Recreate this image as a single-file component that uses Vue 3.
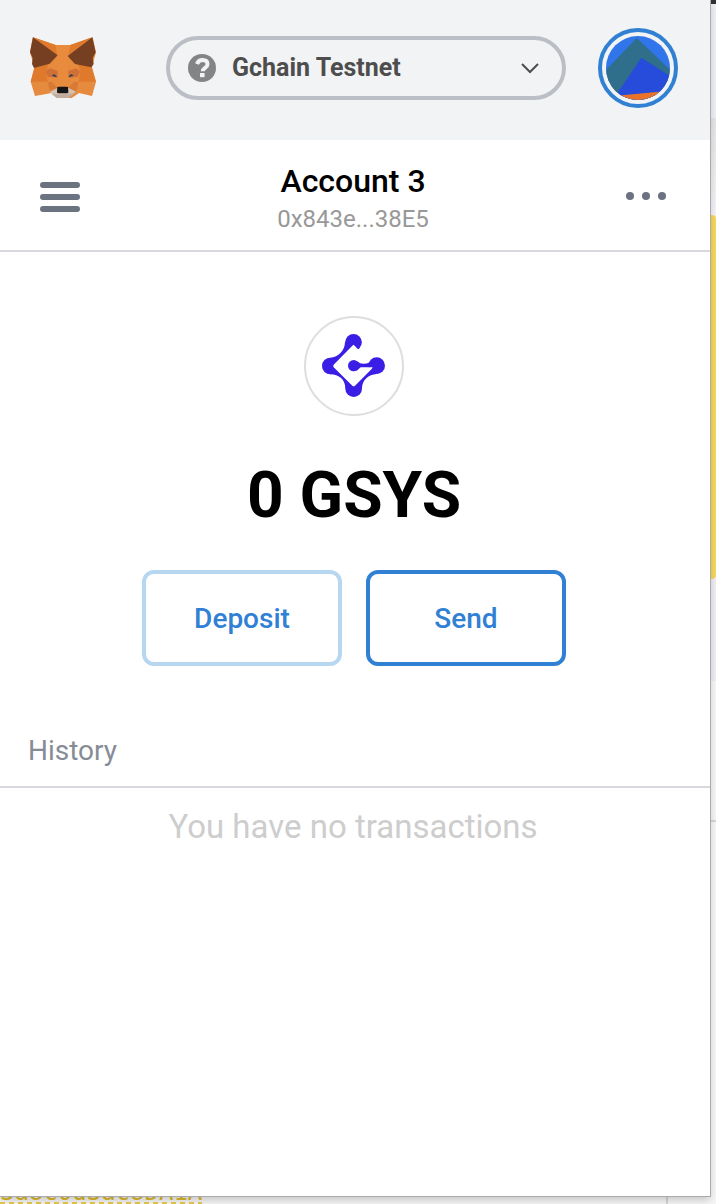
<script setup>
import { ref } from 'vue'

const network = ref('Gchain Testnet')
const networks = ['Gchain Testnet']
</script>

<template>
  <div class="desktop">
    <main class="popup">
      <header class="top">
        <svg class="fox" viewBox="30 24 198 192" aria-label="MetaMask" role="img">
          <path fill="#e68a3d" d="M38 28 107 51h44l67 -23 10 45-12 44 12 44-12 43-39-9-22 15h-38l-22-15-50 9-13-43 11-44-13-44Z" />
          <path fill="#df7a2d" d="M107 51 40 28l72 54ZM151 51l65-23-72 56ZM44 119l42-12-8 26 5 28H32ZM214 118l-41-12 8 26-5 29h52Z" />
          <path fill="#e88b3c" d="M107 51h44l-7 36 1 60-4 31h-25l-4-31V87Z" />
          <path fill="#d87a35" d="M83 162h12l18 18-22 12ZM175 162h-12l-19 18 24 12Z" />
          <path fill="#cf7137" d="m77 130 13-9 23 8v15l-3 5-27-3ZM180 130l-12-9-23 8v15l3 5 26-3Z" />
          <path fill="#763f21" d="M39 28 113 82 89 107 42 120l-6-12 2-18-8-17ZM217 28 143 84l22 24 49 10 7-10-3-18 9-17Z" />
          <path fill="#d5bfb0" d="m89 191 21-10h38l20 10-23 19h-35Z" />
          <path fill="#c0ad9e" d="m94 197 20 2h28l22-4-19 15h-35Z" />
          <path fill="#334555" d="m95 143 7-5 7 5 1 5ZM161 143l-7-5-7 5-1 5Z" />
          <path fill="#161616" d="m112 177 5-1h21l6 1 1 17-4 2h-26l-4-2Z" />
        </svg>
        <label class="network">
          <svg class="help" viewBox="0 0 28 28" aria-hidden="true">
            <circle cx="14" cy="14" r="14" fill="#838485" />
            <path d="M9 10c1-3 3-4 5.500-4 3 0 5 1.500 5 4.200 0 3.800-4.700 3.500-4.700 7" fill="none" stroke="#f2f3f4" stroke-width="4" />
            <path d="M12 19h4.600v4.200H12z" fill="#f2f3f4" />
          </svg>
          <select v-model="network" aria-label="Network">
            <option v-for="name in networks" :key="name">{{ name }}</option>
          </select>
          <svg class="chevron" viewBox="0 0 20 12" aria-hidden="true">
            <path d="m2 2 8 8 8-8" fill="none" stroke="#4d4d4d" stroke-width="2" />
          </svg>
        </label>
        <button class="avatar" type="button" aria-label="My accounts">
          <svg viewBox="378 48 192 192" aria-hidden="true">
            <path fill="#3075ea" d="M378 48h192v192H378z" />
            <path fill="#2f6f8b" d="m470 54 100 95v91H378v-90Z" />
            <path fill="#274bdb" d="m484 113 86 55v72H398Z" />
            <path fill="#ea732b" d="m410 227 160-15v28H410Z" />
            <path fill="#2f6f8b" d="m378 180 38 36-10 16h-28Z" />
          </svg>
        </button>
      </header>

      <section class="account">
        <button class="menu" type="button" aria-label="Menu"><i></i><i></i><i></i></button>
        <button class="identity" type="button">
          <span class="name">Account 3</span>
          <span class="address">0x843e...38E5</span>
        </button>
        <button class="more" type="button" aria-label="Account options"><i></i><i></i><i></i></button>
      </section>

      <section class="balance">
        <div class="token">
          <svg viewBox="81 84 192 192" aria-hidden="true">
            <g fill="#3a1ee5">
              <path d="M150 108c0 25-20 46-44 47v50c26 0 45 16 45 42h50c0-24 20-42 44-43l-14-20-55 15-15-80Z" />
              <circle cx="175.500" cy="109" r="25" />
              <circle cx="106" cy="180" r="25" />
              <circle cx="176" cy="248" r="25" />
              <circle cx="245" cy="179" r="25" />
            </g>
            <path fill="#fff" d="m176 116-4 3-56 57q-3 4 0 8l56 55q4 4 8 0l50-50 3-5-33-1-8-50Z" />
            <g fill="#3a1ee5">
              <circle cx="176" cy="179" r="17" />
              <path d="M187 166q14 14 39 2v16h-29l-12 10Z" />
            </g>
          </svg>
        </div>
        <h1>0 GSYS</h1>
        <div class="actions">
          <button class="deposit" type="button">Deposit</button>
          <button class="send" type="button">Send</button>
        </div>
      </section>

      <section class="history">
        <h2>History</h2>
        <p>You have no transactions</p>
      </section>
    </main>
    <div class="side" aria-hidden="true">
      <span class="dark"></span><span class="cool"></span><span class="fade"></span>
      <span class="gold"></span><span class="cool lower"></span><span class="pale"></span>
    </div>
    <div class="under">
      <a href="#">3a8c0d3ac8DA1A</a>
      <span class="rule"></span>
    </div>
  </div>
</template>

<style>
body { margin: 0; }
</style>

<style scoped>
* { box-sizing: border-box; }
.desktop {
  min-height: 100vh;
  display: grid;
  grid-template-columns: minmax(0, 1fr) 6px;
  grid-template-rows: 1fr 8px;
  background: #f6f6f6;
  font-family: Roboto, "Liberation Sans", sans-serif;
  overflow: hidden;
}
button { font: inherit; background: none; border: 0; padding: 0; cursor: pointer; }
.popup {
  position: relative;
  z-index: 1;
  background: #fff;
  box-shadow: 0 0 0 1px #aaabad, 0 4px 8px rgba(0, 0, 0, .2);
}
.top {
  display: flex;
  align-items: center;
  gap: 32px;
  height: 140px;
  padding: 0 32px 4px 30px;
  background: #f2f3f4;
}
.fox { width: 66px; height: 64px; flex: none; }
.network {
  display: flex;
  align-items: center;
  width: 400px;
  height: 64px;
  margin-left: auto;
  padding: 0 22px 0 18px;
  border: 4px solid #bbbec4;
  border-radius: 32px;
}
.help { width: 28px; height: 28px; flex: none; }
.network select {
  flex: 1;
  min-width: 0;
  appearance: none;
  border: 0;
  background: none;
  padding: 0;
  margin: 0 12px 0 16px;
  font: 700 25px/32px Roboto, sans-serif;
  color: #4d4d4d;
}
.chevron { width: 20px; height: 12px; flex: none; }
.avatar {
  width: 80px;
  height: 80px;
  flex: none;
  padding: 4px;
  border: 4px solid #3080d4;
  border-radius: 50%;
}
.avatar svg { display: block; width: 64px; height: 64px; border-radius: 50%; }
.account {
  display: grid;
  grid-template-columns: 1fr auto 1fr;
  align-items: center;
  height: 112px;
  padding: 4px 44px 0 40px;
  border-bottom: 2px solid #d8d9de;
}
.menu { display: grid; gap: 6px; width: 40px; }
.menu i { height: 6px; border-radius: 3px; background: #6a737f; }
.identity { display: grid; padding-top: 4px; text-align: center; }
.name { font-size: 32px; line-height: 40px; font-weight: 500; color: #000; }
.address { font-size: 24px; line-height: 36px; color: #989898; }
.more { display: flex; gap: 8px; justify-self: end; padding-bottom: 2px; }
.more i { width: 8px; height: 8px; border-radius: 50%; background: #6a737f; }
.balance {
  display: flex;
  flex-direction: column;
  align-items: center;
  padding: 64px 2px 48px 0;
}
.token {
  display: grid;
  place-items: center;
  width: 100px;
  height: 100px;
  border: 2px solid #dedede;
  border-radius: 50%;
}
.token svg { width: 64px; height: 64px; }
h1 { margin: 40px 0 34px; font-size: 64px; line-height: 80px; font-weight: 700; color: #000; }
.actions { display: flex; gap: 24px; }
.actions button {
  width: 200px;
  height: 96px;
  border: 4px solid #3080d4;
  border-radius: 12px;
  font-size: 28px;
  font-weight: 500;
  color: #3080d4;
}
.actions .deposit { border-color: #b7d6f0; }
h2 {
  margin: 0;
  padding: 17px 28px 15px;
  border-bottom: 2px solid #d8d9de;
  font-size: 28px;
  line-height: 40px;
  font-weight: 400;
  color: #868c96;
}
.history p { margin: 19px 4px 0 0; text-align: center; font-size: 33px; line-height: 40px; color: #cdcdcd; }
.side { grid-column: 2; grid-row: 1 / 3; display: flex; flex-direction: column; background: #f6f6f6; }
.dark { height: 4px; background: #333; }
.cool { height: 114px; background: #eef0f5; }
.fade { height: 97px; background: linear-gradient(#e5e5e6, #f4f4f8); }
.gold { height: 364px; background: #f6d85a; border-radius: 0 4px 4px 0; }
.cool.lower { height: 102px; background: #eeeef3; }
.pale { height: 141px; border-bottom: 2px solid #d5d5da; }
.under { grid-column: 1; grid-row: 2; height: 8px; display: flex; align-items: flex-end; }
.under a {
  flex: none;
  padding-bottom: 2px;
  font: 24px/20px "DejaVu Sans Mono", monospace;
  color: #dfb92a;
  text-decoration: none;
  background: repeating-linear-gradient(90deg, #e8ca4c 0 5px, transparent 5px 9px) bottom / 100% 2px no-repeat;
}
.rule { width: 2px; height: 8px; margin: 0 42px 0 auto; background: #d5d5da; }
</style>
